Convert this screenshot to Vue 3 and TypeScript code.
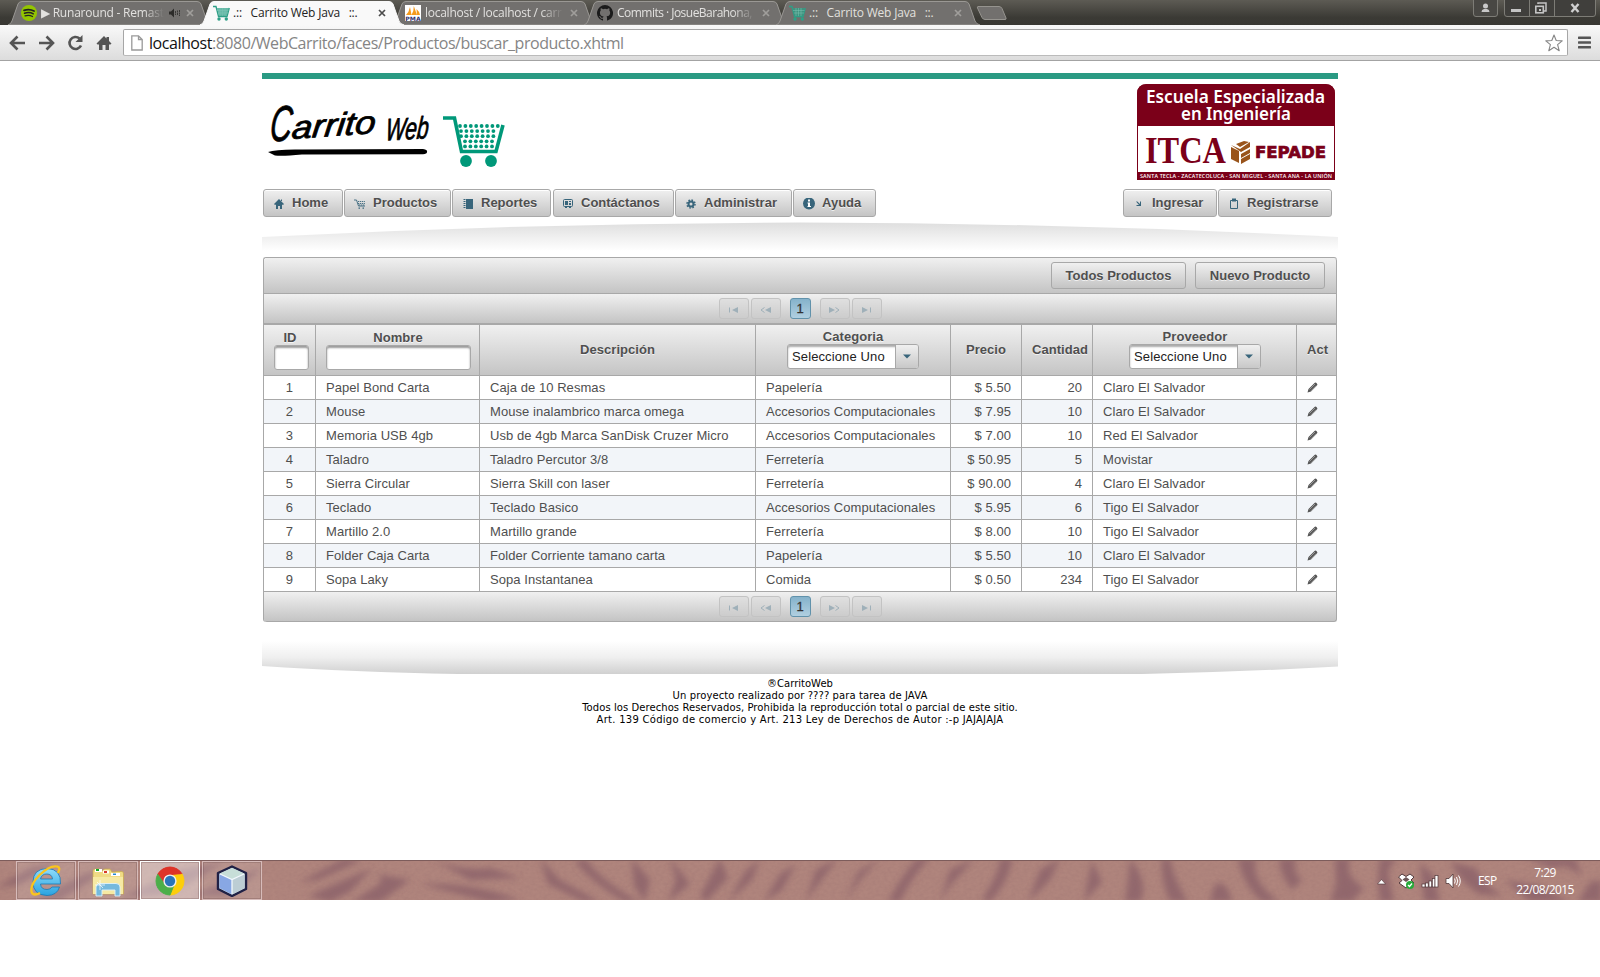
<script setup lang="ts">
interface Tab { icon: string; title: string; active?: boolean; faded?: boolean; audio?: boolean; ls: number }
interface Product { id: number; name: string; desc: string; cat: string; price: string; qty: number; prov: string }

const tabs: Tab[] = [
  { icon: 'spotify', title: '▶ Runaround - Remast', faded: true, audio: true, ls: -0.22 },
  { icon: 'cart', title: '.::   Carrito Web Java   ::.', active: true, ls: -0.2 },
  { icon: 'pma', title: 'localhost / localhost / carr', faded: true, ls: -0.26 },
  { icon: 'github', title: 'Commits · JosueBarahona,', faded: true, ls: -0.52 },
  { icon: 'cart', title: '.::   Carrito Web Java   ::.', ls: -0.2 },
]

const menu = [
  { label: 'Home', icon: 'home', w: 80, gap: 1 },
  { label: 'Productos', icon: 'basket', w: 107, gap: 1 },
  { label: 'Reportes', icon: 'book', w: 99, gap: 2 },
  { label: 'Contáctanos', icon: 'contact', w: 121, gap: 1 },
  { label: 'Administrar', icon: 'gear', w: 117, gap: 1 },
  { label: 'Ayuda', icon: 'info', w: 83, gap: 0 },
]
const session = [
  { label: 'Ingresar', icon: 'arrow', w: 94, gap: 1 },
  { label: 'Registrarse', icon: 'clip', w: 114, gap: 0 },
]

const products: Product[] = [
  { id: 1, name: 'Papel Bond Carta', desc: 'Caja de 10 Resmas', cat: 'Papelería', price: '$ 5.50', qty: 20, prov: 'Claro El Salvador' },
  { id: 2, name: 'Mouse', desc: 'Mouse inalambrico marca omega', cat: 'Accesorios Computacionales', price: '$ 7.95', qty: 10, prov: 'Claro El Salvador' },
  { id: 3, name: 'Memoria USB 4gb', desc: 'Usb de 4gb Marca SanDisk Cruzer Micro', cat: 'Accesorios Computacionales', price: '$ 7.00', qty: 10, prov: 'Red El Salvador' },
  { id: 4, name: 'Taladro', desc: 'Taladro Percutor 3/8', cat: 'Ferretería', price: '$ 50.95', qty: 5, prov: 'Movistar' },
  { id: 5, name: 'Sierra Circular', desc: 'Sierra Skill con laser', cat: 'Ferretería', price: '$ 90.00', qty: 4, prov: 'Claro El Salvador' },
  { id: 6, name: 'Teclado', desc: 'Teclado Basico', cat: 'Accesorios Computacionales', price: '$ 5.95', qty: 6, prov: 'Tigo El Salvador' },
  { id: 7, name: 'Martillo 2.0', desc: 'Martillo grande', cat: 'Ferretería', price: '$ 8.00', qty: 10, prov: 'Tigo El Salvador' },
  { id: 8, name: 'Folder Caja Carta', desc: 'Folder Corriente tamano carta', cat: 'Papelería', price: '$ 5.50', qty: 10, prov: 'Claro El Salvador' },
  { id: 9, name: 'Sopa Laky', desc: 'Sopa Instantanea', cat: 'Comida', price: '$ 0.50', qty: 234, prov: 'Tigo El Salvador' },
]

const dots: { x: number; y: number }[] = []
const rows = [[17, 55], [18, 50], [18, 50], [22, 50], [22, 50]]
rows.forEach(([a, b], r) => {
  for (let x = a; x <= b + 0.5; x += 5.4) dots.push({ x, y: 11 + r * 5.1 })
})

const stripes: string[] = [
  'M-5 28L30 8L60 2L20 24Z', 'M30 42L85 14L110 8L60 40Z', 'M120 38L180 10L225 2L170 34Z', 'M190 36L250 12L262 8L230 36Z',
  'M300 22L345 -2L362 0L318 20Z', 'M308 36L372 8L350 32L330 42Z', 'M375 14Q390 20 370 30L352 42L380 42L410 20Z',
  'M430 -2Q460 12 490 8L520 18L470 20Z', 'M420 24Q470 22 520 40L490 42Z', 'M540 -2L560 20L600 42L584 42L548 24Z',
  'M585 -2Q602 22 640 42L625 42Q596 26 575 2Z', 'M632 -2L650 20L645 42L634 26Z', 'M670 -2L690 24L668 42L676 20Z',
  'M720 -2L728 18L706 42L700 36Z', 'M760 -2L752 20L728 42L745 12Z', 'M796 4L782 30L764 42L780 14Z', 'M838 -2L820 22L805 42L816 10Z',
  'M880 -2L860 20L845 42L858 12Z', 'M930 -2Q912 16 900 42L888 42Q905 10 918 -2Z', 'M975 -2L950 26L940 42L950 10Z',
  'M1012 -2Q1010 20 990 42L982 40Q1000 12 1000 -2Z', 'M1060 -2L1050 20L1028 42L1040 10Z', 'M1092 0L1102 22L1084 42L1088 20Z',
  'M1130 -2Q1150 24 1140 42L1125 42L1128 20Z', 'M1170 -2Q1174 20 1188 42L1170 42Q1160 20 1162 -2Z',
  'M1238 -2L1256 -2Q1250 22 1280 42L1262 42Q1242 24 1238 -2Z', 'M1214 26Q1226 16 1232 42L1210 42Z',
  'M1280 -2L1296 -2Q1292 12 1302 20L1292 30Q1278 12 1280 -2Z', 'M1335 -2L1350 -2Q1344 16 1364 28L1352 42L1330 42L1336 24Z',
  'M1380 -2L1396 -2L1388 12L1394 42L1380 42Q1376 20 1380 -2Z', 'M1420 2L1434 16L1440 42L1424 42Z', 'M1450 2L1476 8L1482 20L1502 36L1478 34L1462 20Z',
  'M1525 -2L1575 -2L1582 16L1566 6L1552 8Z', 'M1505 20L1540 26L1570 42L1530 42Z', 'M1590 22L1602 20V42H1578Z',
]
</script>

<template>
  <div class="screen">
    <header class="strip">
      <div class="tabs">
        <div v-for="(t, i) in tabs" :key="i" class="tab" :class="{ active: t.active }">
          <svg class="tab-shape" width="206" height="25" viewBox="0 0 206 25">
            <path d="M0 25Q3 24 4 21L10 4Q11 1.500 14 1.500H189Q192 1.500 193 4L199 21Q200 24 204 25Z" :fill="t.active ? '#f9f9f9' : '#72706e'" :stroke="t.active ? '#f9f9f9' : '#9a9894'" />
          </svg>
          <span class="fav">
            <svg v-if="t.icon === 'spotify'" width="16" height="16" viewBox="0 0 16 16"><circle cx="8" cy="8" r="8" fill="#93c500" /><g fill="none" stroke="#222" stroke-linecap="round"><path d="M3 5.300Q8.500 3.500 13 6" stroke-width="1.800" /><path d="M3.500 8.200Q8.500 6.700 12.300 8.800" stroke-width="1.500" /><path d="M4 10.900Q8.300 9.700 11.500 11.500" stroke-width="1.200" /></g></svg>
            <svg v-else-if="t.icon === 'cart'" width="17" height="16" viewBox="0 0 17 16"><path d="M0 1.500H3L5.500 11.500H14L16.300 3" fill="none" stroke="#2d9f86" stroke-width="1.300" /><path d="M4 3H16L13.500 11H6Z" fill="#2d9f86" opacity=".72" /><path d="M4 5.500H15.500M5 8H15M7 3V11M9.500 3V11M12 3V11" stroke="#7cc4b4" stroke-width=".5" /><circle cx="6" cy="14" r="1.700" fill="#2d9f86" /><circle cx="13.300" cy="14" r="1.700" fill="#2d9f86" /></svg>
            <svg v-else-if="t.icon === 'pma'" width="16" height="16" viewBox="0 0 16 16"><rect width="16" height="16" fill="#fff" /><path d="M1 10Q4 7 5 2L6.500 10ZM6.500 10Q9 6 8.800 1L12 10ZM12 10L11.500 4Q14 6 15 10Z" fill="#f59a1c" /><text x="0.300" y="15.500" font-size="6" font-weight="700" textLength="15.400" lengthAdjust="spacingAndGlyphs" font-family="DejaVu Sans, sans-serif" fill="#33346f">PMA</text></svg>
            <svg v-else width="16" height="16" viewBox="0 0 16 16"><path fill="#1b1b1b" d="M8 0a8 8 0 0 0-2.530 15.590c.4.070.550-.170.550-.380v-1.490c-2.010.370-2.530-.490-2.690-.940-.090-.230-.480-.940-.820-1.130-.280-.150-.680-.520-.010-.530.630-.010 1.080.580 1.230.820.720 1.210 1.870.870 2.330.660.070-.520.280-.870.510-1.070-1.780-.2-3.640-.890-3.640-3.950 0-.870.310-1.590.820-2.150-.080-.2-.360-1.020.080-2.120 0 0 .670-.210 2.200.820a7.600 7.600 0 0 1 4 0c1.530-1.040 2.200-.820 2.200-.820.440 1.100.160 1.920.080 2.120.510.560.820 1.270.820 2.150 0 3.070-1.870 3.750-3.650 3.950.290.250.540.730.540 1.480v2.200c0 .210.150.460.550.380A8 8 0 0 0 8 0" /></svg>
          </span>
          <span class="tab-title" :class="{ faded: t.faded, short: t.audio }" :style="{ letterSpacing: t.ls + 'px' }">{{ t.title }}</span>
          <svg v-if="t.audio" class="audio" width="11" height="10" viewBox="0 0 11 10"><path d="M0 3.500H2L5 .500V9.500L2 6.500H0Z" fill="#2c2b29" /><path d="M6.500 3V7M8.500 2.500V7.500M10.500 2V8" fill="none" stroke="#2c2b29" stroke-width=".8" stroke-dasharray="2 .5" /></svg>
          <svg class="close" width="8" height="8" viewBox="0 0 8 8"><path d="M1 1L7 7M7 1L1 7" :stroke="t.active ? '#4c4c4c' : '#a09e9b'" stroke-width="1.700" /></svg>
        </div>
        <svg class="newtab" width="33" height="17" viewBox="0 0 33 17"><path d="M3 1.500H24Q26 1.500 27 3.500L31 13Q31.500 14.500 30 14.500H10Q8 14.500 7 12.500L2.500 3Q2 1.500 3 1.500Z" fill="#72706e" stroke="#96948f" /></svg>
      </div>
      <div class="winbtns">
        <svg width="126" height="19" viewBox="0 0 126 19">
          <path d="M.5 0V14Q.5 16.500 3 16.500H22Q24.500 16.500 24.500 14V0" fill="#494844" stroke="#7d7c76" />
          <path d="M31.500 0V14Q31.500 16.500 34 16.500H120Q122.500 16.500 122.500 14V0" fill="#403f3c" stroke="#7d7c76" />
          <path d="M56.500 0V16M81.500 0V16" stroke="#7d7c76" />
          <circle cx="12.500" cy="6" r="2.500" fill="#c8c8c8" /><path d="M8.500 12Q8.500 9.300 11 9H14Q16.500 9.300 16.500 12Z" fill="#c8c8c8" />
          <rect x="38" y="9" width="10" height="3" fill="#c4c4c4" />
          <path d="M65 4V3H73V11H71" fill="none" stroke="#c4c4c4" stroke-width="1.500" /><rect x="62.800" y="6.300" width="7.500" height="6.500" fill="#403f3c" stroke="#c4c4c4" stroke-width="1.600" /><rect x="66" y="9" width="2" height="2" fill="#c4c4c4" />
          <path d="M98.500 4L105.500 12M105.500 4L98.500 12" stroke="#cfcfcf" stroke-width="2.400" />
        </svg>
      </div>
    </header>

    <nav class="toolbar">
      <svg class="nav-icons" width="112" height="18" viewBox="0 0 112 18">
        <g fill="none" stroke="#555" stroke-width="2.600"><path d="M2 9H16M8.500 2.500L2 9L8.500 15.500" /><path d="M30 9H44M37.500 2.500L44 9L37.500 15.500" /><path d="M72 11.500A6 6 0 1 1 70.500 4.500" /></g>
        <path d="M73.500 1V8H66.500Z" fill="#555" /><path d="M87.500 9.500L95 2L97.500 4.500V3H100V7L102.500 9.500L101.500 10.500H100V16H96.500V11H93.500V16H90V10.500H88.500Z" fill="#555" />
      </svg>
      <div class="omnibox">
        <svg width="12" height="16" viewBox="0 0 12 16"><path d="M.8.800H7.500L11.200 4.500V15H.8ZM7.500.800V4.500H11.200" fill="#fff" stroke="#999" stroke-width="1.300" /></svg>
        <span class="url"><b>localhost</b>:8080/WebCarrito/faces/Productos/buscar_producto.xhtml</span>
        <svg class="star" width="18" height="18" viewBox="0 0 18 18"><path d="M9 1L11.200 6.500L17.200 6.900L12.600 10.600L14.200 16.700L9 13.300L3.800 16.700L5.400 10.600L.8 6.900L6.800 6.500Z" fill="none" stroke="#858585" stroke-width="1.100" stroke-linejoin="round" /></svg>
      </div>
      <svg class="burger" width="13" height="13" viewBox="0 0 13 13"><path d="M1 1.800H12M1 6.500H12M1 11.300H12" stroke="#555" stroke-width="2.600" stroke-linecap="round" /></svg>
    </nav>

    <main class="page">
      <div class="green"></div>
      <div class="brand">
        <svg class="logo" width="250" height="80" viewBox="0 0 250 80" aria-label="Carrito Web">
          <g class="script">
            <g transform="translate(7 46.500) rotate(-3) skewX(-8)"><text font-size="50" textLength="22" lengthAdjust="spacingAndGlyphs">C</text></g>
            <g transform="translate(29 44) rotate(-4) skewX(-10)"><text font-size="32" textLength="84" lengthAdjust="spacingAndGlyphs">arrito</text></g>
            <g transform="translate(123 45.500) rotate(-3) skewX(-8)"><text font-size="31" textLength="43" lengthAdjust="spacingAndGlyphs">Web</text></g>
          </g>
          <path d="M6 57Q14 54 40 54.500L161 54Q166 55 165 57Q165 59 161 59.200L40 59.500Q20 61.500 13 60.500Z" fill="#000" />
          <g transform="translate(181 20)">
            <path d="M0 3H11.500L18.500 36.500H53L60 10" fill="none" stroke="#009879" stroke-width="3.600" />
            <circle v-for="(d, i) in dots" :key="i" :cx="d.x" :cy="d.y" r="1.900" fill="#009879" />
            <circle cx="23" cy="46" r="5.900" fill="#009879" /><circle cx="48" cy="46" r="5.900" fill="#009879" />
          </g>
        </svg>
        <svg class="school" width="198" height="96" viewBox="0 0 198 96">
          <path d="M.5 95.500V10Q.5.500 10 .500H188Q197.500.500 197.500 10V95.500Z" fill="#fff" stroke="#7b0019" />
          <path d="M0 42V10Q0 0 10 0H188Q198 0 198 10V42Z" fill="#7b0019" /><rect y="88" width="198" height="8" fill="#7b0019" />
          <g font-family="Noto Sans, sans-serif" font-weight="600" fill="#fff" font-size="18"><text x="9" y="18.500" textLength="179" lengthAdjust="spacingAndGlyphs">Escuela Especializada</text><text x="44" y="35.500" textLength="110" lengthAdjust="spacingAndGlyphs">en Ingeniería</text></g>
          <text x="8" y="79" font-family="Liberation Serif, serif" font-weight="700" font-size="38" fill="#7b0019" textLength="81" lengthAdjust="spacingAndGlyphs">ITCA</text>
          <path d="M94 61L103 65L113 58V63L104 68ZM94 63L102 67V79L94 75ZM104 70L113 65V69L104 74ZM104 75L113 70V75L104 80ZM99 60L107 57L112 58L103 63Z" fill="#99541b" />
          <text x="118" y="74" font-family="DejaVu Sans, sans-serif" font-weight="700" font-size="16" fill="#7b0019" stroke="#7b0019" stroke-width=".7" textLength="71" lengthAdjust="spacingAndGlyphs">FEPADE</text>
          <text x="3" y="94" font-family="Open Sans, sans-serif" font-weight="600" font-size="5.400" fill="#fff" textLength="192">SANTA TECLA - ZACATECOLUCA - SAN MIGUEL - SANTA ANA - LA UNIÓN</text>
        </svg>
      </div>

      <div class="menu">
        <template v-for="(group, gi) in [menu, session]" :key="gi">
          <div class="group">
            <button v-for="m in group" :key="m.label" class="btn" :style="{ width: m.w + 'px', marginRight: m.gap + 'px' }">
              <svg class="mi" :class="m.icon" width="12" height="12" viewBox="0 0 12 12" fill="#38657b">
                <path v-if="m.icon === 'home'" d="M6 1L11 6L10 7L9 6.500V11H7V8H5V11H3V6.500L2 7L1 6ZM8 1.500H9V3H8Z" />
                <g v-else-if="m.icon === 'basket'"><path d="M0 2H2.500L4.500 8H11" fill="none" stroke="#38657b" stroke-width=".9" /><path d="M4 3.500H11.500M4 5.500H11.500M5 7H11" stroke="#38657b" stroke-width=".9" stroke-dasharray="1.200 .7" /><path d="M4.500 9.500H6V10.700H4.500ZM8.500 9.500H10V10.700H8.500Z" /></g>
                <g v-else-if="m.icon === 'book'"><rect x="4" y="1" width="7" height="10" /><path d="M2.500 1V11" stroke="#38657b" stroke-width="2" stroke-dasharray="1 1" /></g>
                <g v-else-if="m.icon === 'contact'"><rect x="1.500" y="1.500" width="9" height="7" rx="1" fill="none" stroke="#38657b" /><path d="M3 3H6V7H3ZM7 3H9V4H7ZM7 5H9V7H7ZM3 9H5V10H3ZM7 9H9V10H7Z" /></g>
                <g v-else-if="m.icon === 'gear'"><circle cx="6" cy="6" r="2.500" fill="none" stroke="#38657b" stroke-width="2" /><circle cx="6" cy="6" r="4" fill="none" stroke="#38657b" stroke-width="1.500" stroke-dasharray="1.600 1.540" /></g>
                <g v-else-if="m.icon === 'info'"><circle cx="6" cy="5.500" r="6" /><path d="M5 1.500H7V3.500H5ZM4.500 4.500H7V8H8V9H4.500V8H5V5.500H4.500Z" fill="#fff" /></g>
                <path v-else-if="m.icon === 'arrow'" d="M3 3.500H4.300L7 6V3.500H8V8H3.500V7H6Z" />
                <g v-else><path d="M2.500 2.500H9.500V10.500H2.500Z" fill="none" stroke="#38657b" /><path d="M4 .500H8V3.500H4Z" /></g>
              </svg>
              <span>{{ m.label }}</span>
            </button>
          </div>
        </template>
      </div>

      <svg class="arc" width="1076" height="34" viewBox="0 0 1076 34">
        <defs><linearGradient id="g1" x1="0" x2="0" y1="0" y2="1"><stop offset="0" stop-color="#dedede" /><stop offset=".5" stop-color="#efefef" /><stop offset="1" stop-color="#fff" /></linearGradient></defs>
        <path d="M0 20Q270 6 538 5.500Q806 6 1076 20V34H0Z" fill="url(#g1)" />
      </svg>

      <section class="table">
        <div class="bar top"><button class="btn wide">Todos Productos</button><button class="btn wide second">Nuevo Producto</button></div>
        <template v-for="pos in ['up', 'down']" :key="pos">
          <template v-if="pos === 'down'">
            <div class="row head">
              <div class="stack"><span>ID</span><i class="inp id"></i></div>
              <div class="stack"><span>Nombre</span><i class="inp name"></i></div>
              <div>Descripción</div>
              <div class="stack sel-cell cat"><span>Categoria</span><span class="select"><em>Seleccione Uno</em><u><svg width="8" height="5" viewBox="0 0 8 5"><path d="M0 .500H8L4 4.500Z" fill="#38657b" /></svg></u></span></div>
              <div>Precio</div>
              <div class="over">Cantidad</div>
              <div class="stack sel-cell"><span>Proveedor</span><span class="select"><em>Seleccione Uno</em><u><svg width="8" height="5" viewBox="0 0 8 5"><path d="M0 .500H8L4 4.500Z" fill="#38657b" /></svg></u></span></div>
              <div class="act">Act</div>
            </div>
            <div v-for="p in products" :key="p.id" class="row data" :class="{ alt: p.id % 2 === 0 }">
              <div class="c">{{ p.id }}</div><div>{{ p.name }}</div><div>{{ p.desc }}</div><div>{{ p.cat }}</div>
              <div class="r">{{ p.price }}</div><div class="r">{{ p.qty }}</div><div>{{ p.prov }}</div>
              <div><svg width="11" height="11" viewBox="0 0 11 11"><path d="M.5 10.500L1.500 7L7.500 1Q8.500 0 9.700 1.200Q11 2.400 10 3.500L4 9.500Z" fill="#555" /><path d="M2.500 7.500L8 2M4 8.800L9.300 3.500" stroke="#aaa" stroke-width=".8" /></svg></div>
            </div>
          </template>
          <div class="bar pager" :class="pos">
            <span class="pg"><svg width="11" height="8" viewBox="0 0 11 8"><path d="M1 1.500h1v5H1zM10 1v6L4 4z" fill="#9fb0b9" /></svg></span>
            <span class="pg"><svg width="11" height="8" viewBox="0 0 11 8"><path d="M4.500 1.500L1 4L4.500 6.500" fill="none" stroke="#9fb0b9" /><path d="M11 1v6L5 4z" fill="#9fb0b9" /></svg></span>
            <span class="cur">1</span>
            <span class="pg"><svg width="11" height="8" viewBox="0 0 11 8"><path d="M0 1v6l6-3z" fill="#9fb0b9" /><path d="M6.500 1.500L10 4L6.500 6.500" fill="none" stroke="#9fb0b9" /></svg></span>
            <span class="pg"><svg width="11" height="8" viewBox="0 0 11 8"><path d="M1 1v6l6-3zM9 1.500h1v5H9z" fill="#9fb0b9" /></svg></span>
          </div>
        </template>
      </section>

      <svg class="foot-shade" width="1076" height="33" viewBox="0 0 1076 33">
        <defs><linearGradient id="g2" x1="0" x2="0" y1="0" y2="1"><stop offset="0" stop-color="#fff" /><stop offset=".5" stop-color="#efefef" /><stop offset="1" stop-color="#d0d0d0" /></linearGradient></defs>
        <path d="M0 0H1076V25.500Q980 31 880 33H196Q90 31 0 25Z" fill="url(#g2)" />
      </svg>
      <footer class="foot">
        <p class="f1">®CarritoWeb</p><p class="f2">Un proyecto realizado por ???? para tarea de JAVA</p>
        <p class="f3">Todos los Derechos Reservados, Prohibida la reproducción total o parcial de este sitio.</p><p class="f4">Art. 139 Código de comercio y Art. 213 Ley de Derechos de Autor :-p JAJAJAJA</p>
      </footer>
    </main>

    <div class="taskbar">
      <svg class="fur" width="1600" height="40" viewBox="0 0 1600 40">
        <defs>
          <filter id="soft" x="-5%" y="-30%" width="110%" height="160%"><feGaussianBlur stdDeviation="3" /></filter>
          <filter id="grain" x="0" y="0" width="100%" height="100%"><feTurbulence type="fractalNoise" baseFrequency=".25 .35" numOctaves="2" /><feColorMatrix values="0 0 0 0 .3  0 0 0 0 .15  0 0 0 0 .15  .6 0 0 0 -.18" /></filter>
        </defs>
        <rect width="1600" height="40" fill="#b0857d" />
        <g filter="url(#soft)" fill="#8a6069" opacity=".8"><path v-for="(s, i) in stripes" :key="i" :d="s" /></g>
        <rect width="1600" height="40" filter="url(#grain)" opacity=".6" />
        <path d="M0 .500H1600" stroke="#7d5c5b" />
      </svg>
      <div class="apps">
        <span class="app"><svg width="32" height="32" viewBox="0 0 32 32"><defs><linearGradient id="ie" x1="0" x2="0" y1="0" y2="1"><stop offset="0" stop-color="#8fdcfb" /><stop offset="1" stop-color="#2aa3e0" /></linearGradient></defs><path d="M30.500 19H10.500Q11 24.500 17 24.500Q20.500 24.500 22 22H29.500Q27 30.500 17 30.500Q3 30 3 17Q3 4 17 3.500Q31.500 4 30.500 19ZM10.500 14H22.500Q22 9 16.700 9Q11.500 9 10.500 14Z" fill="url(#ie)" stroke="#1b78b4" stroke-width=".8" /><path d="M28 8Q31 2 27 1.500Q20 0 9.500 10Q-1 21 2 28Q4 31 10 28" fill="none" stroke="#f9c51d" stroke-width="2.300" /></svg></span>
        <span class="app"><svg width="32" height="32" viewBox="0 0 32 32"><path d="M1 29V6Q1 4 3 4H8L9 5.500H11Q11 4 13 4H18L20 7H23Q24 6.500 25 6.500H30Q32 7 31.500 9V29Z" fill="#f0db84" stroke="#c6a94d" stroke-width=".7" /><path d="M3 4H10V7H3ZM11 5.500H17V8.500H11ZM19 8H28V11H19Z" fill="#fff" /><path d="M4 4H7V6H4Z" fill="#11aa22" /><path d="M12 6H15V8H12Z" fill="#d83a2d" /><path d="M21 8.500H24V10H21Z" fill="#2589d5" /><path d="M1 12H31V29H1Z" fill="#f6e9a3" /><path d="M4 31V22Q4 18.500 8 18.500H24Q28 18.500 28 22V31H23V25H10V31Z" fill="#75b9dd" stroke="#dff2fb" stroke-width=".9" /><path d="M8 15V25M3 20H13M5 17L11 23" stroke="#fff" stroke-width=".7" /></svg></span>
        <span class="app on"><svg width="32" height="32" viewBox="0 0 32 32"><path d="M3.900 9A14 14 0 0 1 28.100 9L16 10Z" fill="#dd3328" stroke="#dd3328" /><path d="M28.100 9A14 14 0 0 1 16 30L21 19L19 10Z" fill="#fdce0a" stroke="#fdce0a" /><path d="M16 30A14 14 0 0 1 3.900 9L11 19L20 20Z" fill="#4cae49" stroke="#4cae49" /><path d="M3.900 9L11 19L16 10L28 9A14 14 0 0 0 3.900 9" fill="#dd3328" /><circle cx="16" cy="16" r="6.600" fill="#eee" /><circle cx="16" cy="16" r="5.200" fill="#2b74b9" /></svg></span>
        <span class="app"><svg width="32" height="32" viewBox="0 0 32 32"><path d="M16 1.500L30 8V24L16 31L2 24V8Z" fill="#cbdae2" stroke="#202145" stroke-width="2.400" stroke-linejoin="round" /><path d="M3.500 9L16 14.500V29.500L3.500 23Z" fill="#88a7e4" /><path d="M28.500 9L16 14.500V29.500L28.500 23Z" fill="#bccdd4" /><path d="M16 3L28 8.500L16 14L4 8.500Z" fill="#c7ded8" /><path d="M4 9L16 14.500L28 9M16 14.500V29" fill="none" stroke="#f2f8fc" stroke-width="1.300" /></svg></span>
      </div>
      <div class="tray">
        <svg width="84" height="18" viewBox="0 0 84 18">
          <path d="M.5 12L4.500 7.500L8.500 12Z" fill="#fff" stroke="#4c3436" stroke-width=".6" />
          <path d="M25 2L29 4.500L33 2L37 5L34 8L37 11L29 16L22 11L25 8.500L21.500 5Z" fill="#fff" stroke="#51393b" /><path d="M29 5L32.500 7.500L29 10L25.500 7.500Z" fill="#6b5556" /><circle cx="33" cy="13" r="4" fill="#27ab3a" /><path d="M31 13L32.500 14.500L35 11.500" fill="none" stroke="#fff" stroke-width="1.300" />
          <g fill="#fff" stroke="#503739" stroke-width=".7"><rect x="45" y="12" width="3" height="3" /><rect x="48.500" y="11" width="2.700" height="4" /><rect x="52" y="9" width="2.700" height="6" /><rect x="55.300" y="6.500" width="2.700" height="8.500" /><rect x="58" y="3.500" width="3" height="11.500" /></g>
          <path d="M69 6.500H72L76 2V16L72 11.500H69Z" fill="#fff" stroke="#503739" stroke-width=".8" /><path d="M77.500 6.500Q79 9 77.500 11.500M79.500 5Q82 9 79.500 13M81.500 3.500Q85 9 81.500 14.500" fill="none" stroke="#fff" />
        </svg>
        <span class="lang">ESP</span>
        <span class="clock"><span>7:29</span><span>22/08/2015</span></span>
      </div>
    </div>
  </div>
</template>

<style>
body { margin: 0; background: #fff; }
</style>

<style scoped>
.screen { width: 1600px; height: 977px; background: #fff; overflow: hidden; font-family: "Liberation Sans", Arial, sans-serif; display: flex; flex-direction: column; }
svg { display: block; flex: none; }
.strip { height: 25px; flex: none; background: linear-gradient(#5d5b54, #3b3a35 70%, #393833); display: flex; justify-content: space-between; }
.tabs { display: flex; padding-left: 8px; }
.tab { position: relative; width: 192px; height: 25px; display: flex; align-items: center; color: #e2e1df; font: 12px "Open Sans", sans-serif; }
.tab.active { z-index: 2; color: #222; }
.tab-shape { position: absolute; left: 0; top: 0; }
.fav { position: relative; margin-left: 13px; width: 17px; flex: none; }
.tab-title { position: relative; margin-left: 3px; width: 140px; white-space: pre; line-height: 18px; flex: none; }
.tab-title.faded { -webkit-mask-image: linear-gradient(90deg, #000 84%, transparent); mask-image: linear-gradient(90deg, #000 84%, transparent); width: 138px; }
.tab-title.faded.short { width: 123px; }
.audio { position: relative; margin-left: 5px; }
.close { position: absolute; left: 178px; top: 9px; }
.newtab { margin: 5px 0 0 7px; }
.winbtns { margin-right: 1px; }
.toolbar { height: 35px; flex: none; background: linear-gradient(#f9f9f9, #dcdcdc); border-bottom: 1px solid #a3a3a3; display: flex; align-items: center; }
.nav-icons { margin-left: 9px; }
.omnibox { margin-left: 2px; width: 1443px; height: 25px; border: 1px solid #a6a6a6; border-bottom-color: #bbb; border-radius: 2px; background: #fff; display: flex; align-items: center; }
.omnibox > svg:first-child { margin-left: 7px; }
.url { margin-left: 6px; font: 16px "Open Sans", sans-serif; color: #858585; letter-spacing: -0.46px; white-space: nowrap; }
.url b { font-weight: 400; color: #111; }
.star { margin-left: auto; margin-right: 4px; }
.burger { margin-left: 10px; }
.page { width: 1076px; margin-left: 262px; height: 799px; flex: none; display: flex; flex-direction: column; }
.green { margin-top: 12px; height: 6px; background: #2a9a83; flex: none; }
.brand { display: flex; justify-content: space-between; height: 110px; flex: none; }
.logo { margin-top: 16px; }
.script { font-family: "Liberation Sans", sans-serif; font-style: italic; fill: #000; stroke: #000; stroke-width: .8; stroke-linejoin: round; }
.school { margin: 5px 3px 0 0; }
.menu { display: flex; justify-content: space-between; padding: 0 6px 0 1px; height: 28px; flex: none; }
.group { display: flex; }
.btn { box-sizing: border-box; height: 28px; border: 1px solid #a8a8a8; border-radius: 3px; background: linear-gradient(#f0f0f0, #c4c4c4); box-shadow: inset 0 1px #fff; color: #4f4f4f; font: 700 13px/16px "Liberation Sans", Arial, sans-serif; letter-spacing: 0; text-shadow: 0 1px 0 rgba(255, 255, 255, .7); padding: 0; display: flex; align-items: center; white-space: nowrap; }
.mi { margin: 2px 6px 0 9px; }
.mi.contact { margin-left: 8px; }
.btn span { margin-left: 1px; }
.table { margin: 6px 0 0 1px; width: 1073px; border: 1px solid #a8a8a8; border-right: 0; border-bottom: 0; border-radius: 3px; color: #4f4f4f; font-size: 13px; flex: none; box-sizing: content-box; }
.bar { box-sizing: border-box; background: linear-gradient(#f0f0f0, #c4c4c4); border-right: 1px solid #a8a8a8; border-bottom: 1px solid #a8a8a8; display: flex; }
.top { height: 36px; padding: 4px 11px 0 0; justify-content: flex-end; border-radius: 3px 3px 0 0; }
.wide { height: 27px; width: 135px; justify-content: center; box-shadow: none; }
.wide.second { width: 130px; margin-left: 9px; }
.pager { height: 30px; padding: 4px 0 0 2px; justify-content: center; }
.pager.up { height: 31px; border-bottom-width: 2px; }
.pager.down { border-radius: 0 0 3px 3px; }
.pg { box-sizing: border-box; width: 30px; height: 21px; border: 1px solid #c3c3c3; border-radius: 3px; margin-right: 2px; display: flex; align-items: center; justify-content: center; padding-top: 2px; background: rgba(205, 205, 205, .35); }
.cur { box-sizing: border-box; width: 21px; height: 21px; margin: 0 9px 0 7px; border: 1px solid #6192ab; border-radius: 3px; background: linear-gradient(#85b2cb, #b0cfe0); color: #333; text-align: center; line-height: 19px; font-size: 13px; -webkit-text-stroke: .3px #333; }
.row { display: grid; grid-template-columns: 52px 164px 276px 195px 71px 71px 204px 40px; grid-template-rows: 100%; }
.row > div { box-sizing: border-box; border-right: 1px solid #a8a8a8; border-bottom: 1px solid #a8a8a8; min-width: 0; }
.head { height: 51px; background: linear-gradient(#f0f0f0, #c4c4c4); font-weight: 700; text-shadow: 0 1px 0 rgba(255, 255, 255, .7); letter-spacing: .05px; }
.head > div { display: flex; align-items: center; justify-content: center; padding-bottom: 2px; }
.head > .stack { flex-direction: column; justify-content: flex-start; padding: 5px 0 0 1px; line-height: 15px; }
.head > .sel-cell { padding-top: 4px; }
.head > .cat { padding-left: 0; }
.head .over { padding-left: 6px; }
.head .act { padding-left: 2px; }
.inp { box-sizing: border-box; height: 25px; border: 1px solid #a8a8a8; border-radius: 3px; background: #fff; box-shadow: inset 0 2px 2px #9a9a9a; }
.inp.id { width: 35px; margin-left: 3px; }
.inp.name { width: 145px; margin-left: 1px; }
.select { box-sizing: border-box; display: flex; width: 132px; height: 25px; border: 1px solid #a8a8a8; border-radius: 3px; background: #fff; overflow: hidden; box-shadow: inset 0 2px 2px #aaa; }
.select em { font-style: normal; font-weight: 400; color: #222; width: 107px; box-sizing: border-box; padding-left: 4px; line-height: 24px; letter-spacing: .12px; white-space: nowrap; text-shadow: none; }
.select u { flex: 1; border-left: 1px solid #a8a8a8; background: linear-gradient(#f0f0f0, #c8c8c8); display: flex; align-items: center; justify-content: center; }
.data { height: 24px; background: #fff; line-height: 23px; letter-spacing: .06px; }
.data.alt { background: #f2f5f9; }
.data > div { padding: 0 10px; white-space: nowrap; }
.data .c { text-align: center; }
.data .r { text-align: right; }
.data svg { margin-top: 6px; }
.foot-shade { margin-top: 20px; }
.foot { margin-top: 3px; text-align: center; font: 10px/12px "DejaVu Sans", Verdana, sans-serif; color: #000; }
.foot-shade { margin-top: 19px; }
.foot { margin-top: 4px; }
.foot p { margin: 0; white-space: nowrap; }
.f2 { letter-spacing: .1px; }
.f3 { letter-spacing: .07px; }
.f4 { letter-spacing: .27px; }
.taskbar { position: relative; height: 40px; flex: none; display: flex; justify-content: space-between; }
.fur { position: absolute; left: 0; top: 0; }
.apps { position: relative; display: flex; gap: 2px; padding-left: 16px; }
.app { box-sizing: border-box; width: 60px; height: 39px; margin-top: 1px; border: 1px solid rgba(225, 200, 200, .75); outline: 1px solid rgba(90, 60, 60, .25); outline-offset: -2px; background: rgba(255, 255, 255, .14); display: flex; align-items: center; justify-content: center; }
.app.on { background: rgba(255, 255, 255, .42); border-color: #fff; }
.tray { position: relative; display: flex; align-items: center; color: #fff; font: 12px "Open Sans", sans-serif; width: 223px; }
.tray svg { margin-top: 2px; }
.lang { margin-left: 17px; letter-spacing: -.6px; width: 19px; white-space: nowrap; }
.clock { margin-left: 17px; display: flex; flex-direction: column; align-items: center; line-height: 17px; width: 62px; letter-spacing: -.6px; padding-top: 2px; }
</style>
